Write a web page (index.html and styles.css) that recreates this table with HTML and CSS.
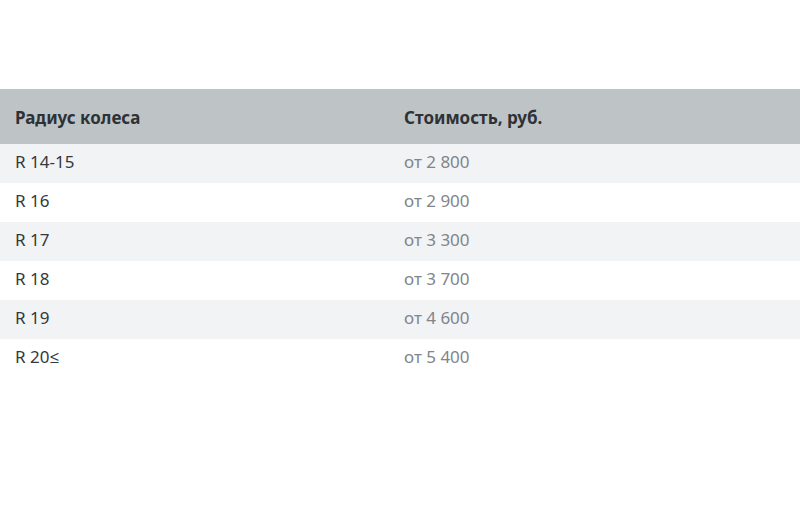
FILE: index.html
```html
<!DOCTYPE html>
<html lang="ru">
<head>
<meta charset="utf-8">
<link rel="stylesheet" href="styles.css">
</head>
<body>
<div class="page">
  <table class="prices">
    <thead>
      <tr><th class="c1">Радиус колеса</th><th class="c2">Стоимость, руб.</th></tr>
    </thead>
    <tbody>
      <tr class="odd"><td class="c1">R 14-15</td><td class="c2">от 2 800</td></tr>
      <tr><td class="c1">R 16</td><td class="c2">от 2 900</td></tr>
      <tr class="odd"><td class="c1">R 17</td><td class="c2">от 3 300</td></tr>
      <tr><td class="c1">R 18</td><td class="c2">от 3 700</td></tr>
      <tr class="odd"><td class="c1">R 19</td><td class="c2">от 4 600</td></tr>
      <tr><td class="c1">R 20≤</td><td class="c2">от 5 400</td></tr>
    </tbody>
  </table>
</div>
</body>
</html>
```
FILE: styles.css
```css
html, body { margin: 0; padding: 0; background: #fff; }
body { font-family: "Noto Sans", "Open Sans", sans-serif; }
.page { padding-top: 89px; }
.prices { width: 800px; border-collapse: collapse; table-layout: fixed; }
.prices th, .prices td { box-sizing: border-box; text-align: left; padding: 0 0 0 15px; font-size: 17px; line-height: 22px; }
.prices .c1 { width: 389px; }
.prices th { background: #bec3c6; height: 55px; font-weight: 700; color: #2e3236; padding-top: 2px; }
.prices td { height: 39px; color: #34383c; padding-bottom: 3px; }
.prices td.c2 { color: #80858b; }
.prices tr.odd td { background: #f2f3f5; }
```
